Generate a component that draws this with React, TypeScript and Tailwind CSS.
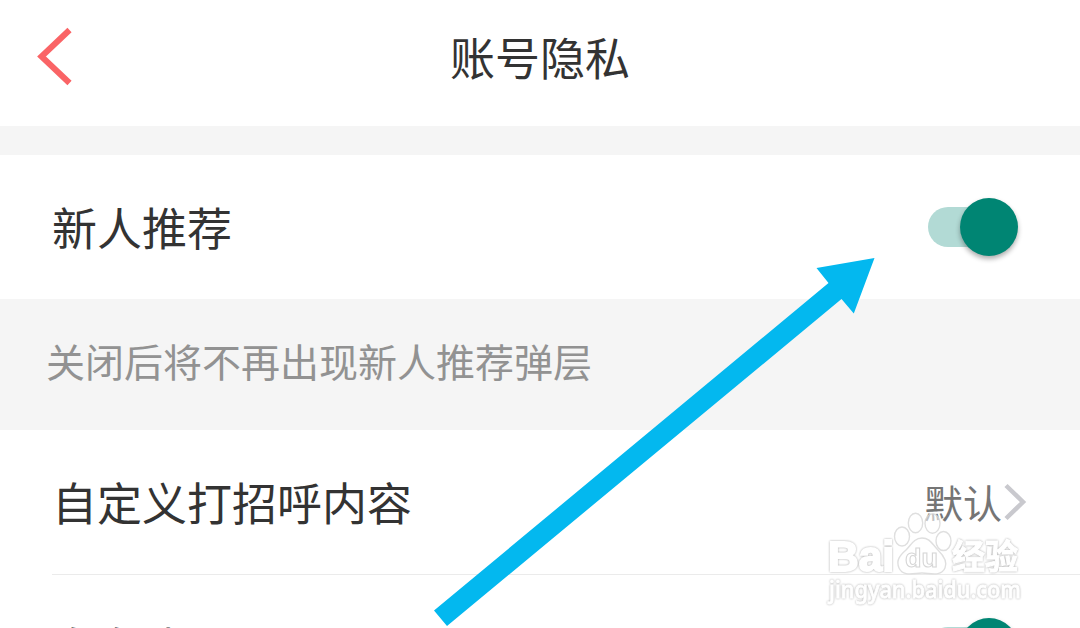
const text = 'font-["Noto_Sans_CJK_SC",sans-serif]';
const halo = 'drop-shadow-[0_0_1px_rgba(0,0,0,0.38)]';

function Switch() {
  return (
    <div className="relative h-10 w-[90px] shrink-0">
      <div className="h-10 w-[82px] rounded-full bg-[#b2dad5]" />
      <div className="absolute -top-[9px] left-[32px] size-[58px] rounded-full bg-[#008573] shadow-[0_3px_5px_rgba(0,0,0,0.32)]" />
    </div>
  );
}

function Watermark() {
  return (
    <svg className="absolute left-[820px] top-[505px]" width="210" height="105" viewBox="820 505 210 105" fill="#fff" stroke="#fff" opacity="0.85">
      <text className={halo} strokeWidth="2" x="828" y="571" fontFamily="Liberation Sans" fontWeight="700" fontSize="43" textLength="66" lengthAdjust="spacingAndGlyphs">Bai</text>
      <g fillOpacity="0.65" stroke="#dadada" strokeWidth="1.4">
        <ellipse cx="902" cy="536.500" rx="7.500" ry="9.500" />
        <ellipse cx="915.500" cy="523" rx="7.200" ry="9.800" />
        <ellipse cx="932.500" cy="523.500" rx="7.500" ry="9.800" />
        <ellipse cx="943.500" cy="541" rx="7.500" ry="9.500" />
        <path fillOpacity="1" d="M922 538 C914 538 911 545 906 550 C899 556 896 561 899 568 C903 577 914 573 922 573 C930 573 941 577 945 568 C948 561 943 555 938 550 C932 544 930 538 922 538 Z" />
      </g>
      <text stroke="#cfcfcf" strokeWidth="1" x="905" y="567" fontFamily="Liberation Sans" fontWeight="700" fontSize="25" textLength="33" lengthAdjust="spacingAndGlyphs">du</text>
      <text className={halo} strokeWidth="1" x="952" y="569" fontFamily="Noto Sans CJK SC" fontWeight="700" fontSize="34" textLength="66" lengthAdjust="spacingAndGlyphs">经验</text>
      <text className={halo} strokeWidth="0.8" x="829" y="598" fontFamily="Noto Sans" fontWeight="500" fontSize="23" textLength="192" lengthAdjust="spacingAndGlyphs">jingyan.baidu.com</text>
    </svg>
  );
}

export default function App() {
  return (
    <main className={`relative flex h-[628px] w-[1080px] flex-col overflow-hidden bg-white text-[45px] text-[#333] ${text}`}>
      <header className="grid h-[126px] shrink-0 grid-cols-[1fr_auto_1fr] items-start">
        <svg className="ml-[34px] mt-[24px]" width="42" height="66" viewBox="34 24 42 66" fill="none" stroke="#fa6466" strokeWidth="6">
          <path d="M69.500 30 L41.500 56.500 L69.500 83" />
        </svg>
        <h1 className="mt-[27px] leading-[60px]">账号隐私</h1>
      </header>
      <div className="h-[29px] shrink-0 bg-[#f5f5f5]" />
      <section className="flex h-[144px] shrink-0 items-center justify-between pl-[52px] pr-[62px]">
        <span className="-mt-px leading-[60px]">新人推荐</span>
        <Switch />
      </section>
      <p className="h-[131px] shrink-0 bg-[#f5f5f5] pl-[46px] pt-[32px] text-[39px] leading-[58px] text-[#929292]">关闭后将不再出现新人推荐弹层</p>
      <section className="ml-[52px] flex h-[145px] shrink-0 items-center justify-between border-b border-[#ebebeb] pr-[52px]">
        <span className="-mt-px leading-[60px]">自定义打招呼内容</span>
        <span className="flex items-center text-[39px] leading-[58px] text-[#757575]">
          <span className="-mt-[3px]">默认</span>
          <svg width="26" height="40" viewBox="1002 482 26 40" fill="none" stroke="#c9c9ce" strokeWidth="4.500">
            <path d="M1006 485.500 L1023 502 L1006 518.500" />
          </svg>
        </span>
      </section>
      <section className="flex h-[144px] shrink-0 items-center justify-between pl-[52px] pr-[62px]">
        <span className="leading-[60px]">向名片</span>
        <Switch />
      </section>
      <svg className="absolute inset-0" width="1080" height="628" fill="#03b8ef">
        <path d="M874.500 258 L853.800 313.500 L841.500 299 L447 626 L434 610.500 L828.500 283 L816.500 268 Z" />
      </svg>
      <Watermark />
    </main>
  );
}
